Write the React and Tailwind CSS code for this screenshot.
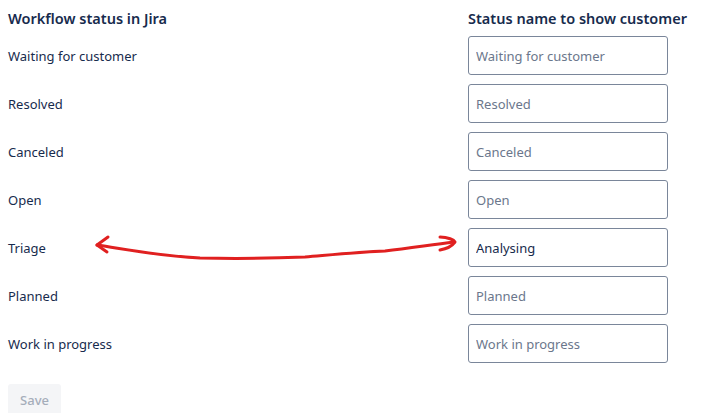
const rows = [
  { jira: 'Waiting for customer', value: '' },
  { jira: 'Resolved', value: '' },
  { jira: 'Canceled', value: '' },
  { jira: 'Open', value: '' },
  { jira: 'Triage', value: 'Analysing' },
  { jira: 'Planned', value: '' },
  { jira: 'Work in progress', value: '' },
];

export default function App() {
  return (
    <div
      className="relative h-[413px] w-[712px] overflow-hidden bg-white px-2 text-[#172b4d]"
      style={{ fontFamily: '"Noto Sans", "Open Sans", sans-serif' }}
    >
      <div className="grid grid-cols-[460px_224px] items-center pt-[7px]">
        <h3 className="h-[22px] text-[14.5px] font-semibold leading-[22px]">Workflow status in Jira</h3>
        <h3 className="h-[22px] whitespace-nowrap text-[14.5px] font-semibold leading-[22px]">Status name to show customer</h3>
      </div>

      <div className="mt-[2px] flex flex-col">
        {rows.map((row) => (
          <div key={row.jira} className="grid h-[48px] grid-cols-[460px_200px] items-center">
            <span className="pt-[3px] text-[13px]">{row.jira}</span>
            <input
              className="h-[39px] w-[200px] rounded-[3px] border border-[#7a869a] bg-white px-[7px] pt-[1px] text-[13px] text-[#172b4d] outline-none placeholder:text-[#6b778c]"
              placeholder={row.jira}
              defaultValue={row.value}
            />
          </div>
        ))}
      </div>

      <button className="mt-[17px] h-[32px] w-[53px] rounded-[3px] bg-[#f4f5f7] pt-[2px] text-[13px] font-medium text-[#a5adba]">
        Save
      </button>

      <svg className="pointer-events-none absolute left-0 top-0" width="712" height="413" viewBox="0 0 712 413">
        <g fill="none" stroke="#e02020" strokeWidth="3" strokeLinecap="round" strokeLinejoin="round">
          <path d="M97 245 C 130 250, 160 256, 200 258 C 240 259, 280 258, 305 257 C 340 254, 360 252, 385 251 C 410 248, 430 245, 454 242" />
          <path d="M108 237 L 97 245 L 107 252" />
          <path d="M440 237 C 448 237, 454 240, 455 242 C 452 246, 446 249, 440 250" />
        </g>
      </svg>
    </div>
  );
}
